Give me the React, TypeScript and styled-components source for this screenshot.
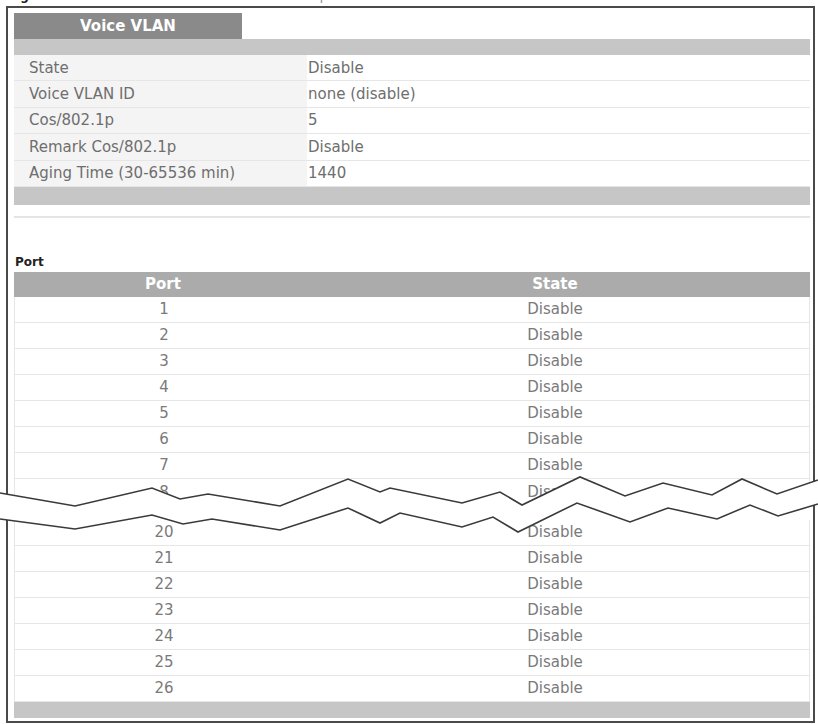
import styled, { createGlobalStyle } from 'styled-components';

const GlobalStyle = createGlobalStyle`
  html, body {
    margin: 0;
    padding: 0;
    background: #fff;
  }
  body {
    font-family: 'DejaVu Sans', 'Liberation Sans', sans-serif;
  }
`;

const settings = [
  { label: 'State', value: 'Disable' },
  { label: 'Voice VLAN ID', value: 'none (disable)' },
  { label: 'Cos/802.1p', value: '5' },
  { label: 'Remark Cos/802.1p', value: 'Disable' },
  { label: 'Aging Time (30-65536 min)', value: '1440' },
];

const topPorts = [1, 2, 3, 4, 5, 6, 7, 8];
const bottomPorts = [20, 21, 22, 23, 24, 25, 26];

// torn-page break drawn across the port list
const upper: [number, number][] = [
  [0, 493], [75, 506], [152, 488], [180, 499], [208, 494], [280, 506],
  [348, 479], [380, 492], [390, 488], [462, 503], [500, 492], [522, 505],
  [580, 477], [625, 496], [663, 483], [712, 495], [742, 479], [777, 494],
  [818, 480],
];
const lower: [number, number][] = [
  [0, 519], [75, 529], [152, 515], [183, 524], [212, 519], [280, 530],
  [348, 508], [380, 523], [400, 513], [462, 527], [493, 517], [518, 532],
  [577, 503], [630, 522], [668, 508], [717, 519], [750, 505], [778, 516],
  [818, 504],
];

const toPoints = (pts: [number, number][]) =>
  pts.map(([x, y]) => `${x},${y}`).join(' ');

export default function App() {
  const band = toPoints([...upper, ...[...lower].reverse()]);

  return (
    <Page>
      <GlobalStyle />
      <Caption>
        <span>
          <b>Figure 98</b>&nbsp;&nbsp; SWITCHING &gt; VLAN &gt; Voice VLAN Setup &gt; Voice VLAN
        </span>
      </Caption>

      <Frame>
        <TabRow>
          <Tab>Voice VLAN</Tab>
        </TabRow>
        <GreyBar $height={16} />

        {settings.map((s) => (
          <InfoRow key={s.label}>
            <InfoLabel>{s.label}</InfoLabel>
            <InfoValue>{s.value}</InfoValue>
          </InfoRow>
        ))}
        <GreyBar $height={18} />
        <Divider />

        <SectionTitle>Port</SectionTitle>
        <PortHeader>
          <PortCell>Port</PortCell>
          <StateCell>State</StateCell>
        </PortHeader>
        {topPorts.map((p) => (
          <PortRow key={p} $last={p === 8}>
            <PortCell>{p}</PortCell>
            <StateCell>Disable</StateCell>
          </PortRow>
        ))}
        <BreakGap />
        {bottomPorts.map((p) => (
          <PortRow key={p}>
            <PortCell>{p}</PortCell>
            <StateCell>Disable</StateCell>
          </PortRow>
        ))}
        <GreyBar $height={16} />
      </Frame>

      <Break width="818" height="70" viewBox="0 470 818 70">
        <polygon points={band} fill="#fff" />
        <polyline points={toPoints(upper)} fill="none" stroke="#3a3a3a" strokeWidth="1.6" />
        <polyline points={toPoints(lower)} fill="none" stroke="#3a3a3a" strokeWidth="1.6" />
      </Break>
    </Page>
  );
}

const Page = styled.div`
  position: relative;
  width: 818px;
  height: 724px;
  overflow: hidden;
  background: #fff;
`;

const Caption = styled.div`
  height: 6px;
  overflow: hidden;
  padding-left: 8px;
  font-size: 12px;
  color: #8a8a8a;

  span {
    display: block;
    line-height: 12px;
    margin-top: -10px;
    white-space: nowrap;
  }
  b {
    color: #222;
  }
`;

const Frame = styled.div`
  box-sizing: border-box;
  width: 809px;
  margin-left: 6px;
  border: 2px solid #4a4a4a;
  padding: 5px 3px 3px 6px;
`;

const TabRow = styled.div`
  display: flex;
`;

const Tab = styled.div`
  width: 228px;
  height: 26px;
  display: flex;
  align-items: center;
  justify-content: center;
  background: #8a8a8a;
  color: #fff;
  font-weight: bold;
  font-size: 15px;
`;

const GreyBar = styled.div<{ $height: number }>`
  height: ${({ $height }) => $height}px;
  background: #c6c6c6;
`;

const InfoRow = styled.div`
  box-sizing: border-box;
  display: flex;
  height: 26.4px;
  border-bottom: 1px solid #e6e6e6;
  font-size: 15px;
  color: #6e6e6e;
`;

const InfoLabel = styled.div`
  width: 293px;
  padding-left: 15px;
  box-sizing: border-box;
  display: flex;
  align-items: center;
  background: #f4f4f4;
  white-space: nowrap;
`;

const InfoValue = styled.div`
  flex: 1;
  padding-left: 1px;
  display: flex;
  align-items: center;
`;

const Divider = styled.div`
  height: 2px;
  margin-top: 11px;
  background: #e4e4e4;
`;

const SectionTitle = styled.div`
  margin-top: 37px;
  height: 17px;
  line-height: 14px;
  font-size: 12px;
  font-weight: bold;
  color: #222;
  padding-left: 1px;
`;

const PortHeader = styled.div`
  display: flex;
  height: 25px;
  align-items: center;
  background: #ababab;
  color: #fff;
  font-weight: bold;
  font-size: 15px;
`;

const PortRow = styled.div<{ $last?: boolean }>`
  box-sizing: border-box;
  display: flex;
  align-items: center;
  height: 26px;
  border-left: 1px solid #e6e6e6;
  border-right: 1px solid #e6e6e6;
  border-bottom: ${({ $last }) => ($last ? 'none' : '1px solid #e6e6e6')};
  font-size: 15px;
  color: #7a7a7a;
`;

const PortCell = styled.div`
  width: 298px;
  text-align: center;
`;

const StateCell = styled.div`
  flex: 1;
  padding-right: 12px;
  text-align: center;
`;

const BreakGap = styled.div`
  height: 15px;
`;

const Break = styled.svg`
  position: absolute;
  left: 0;
  top: 470px;
  pointer-events: none;
`;
